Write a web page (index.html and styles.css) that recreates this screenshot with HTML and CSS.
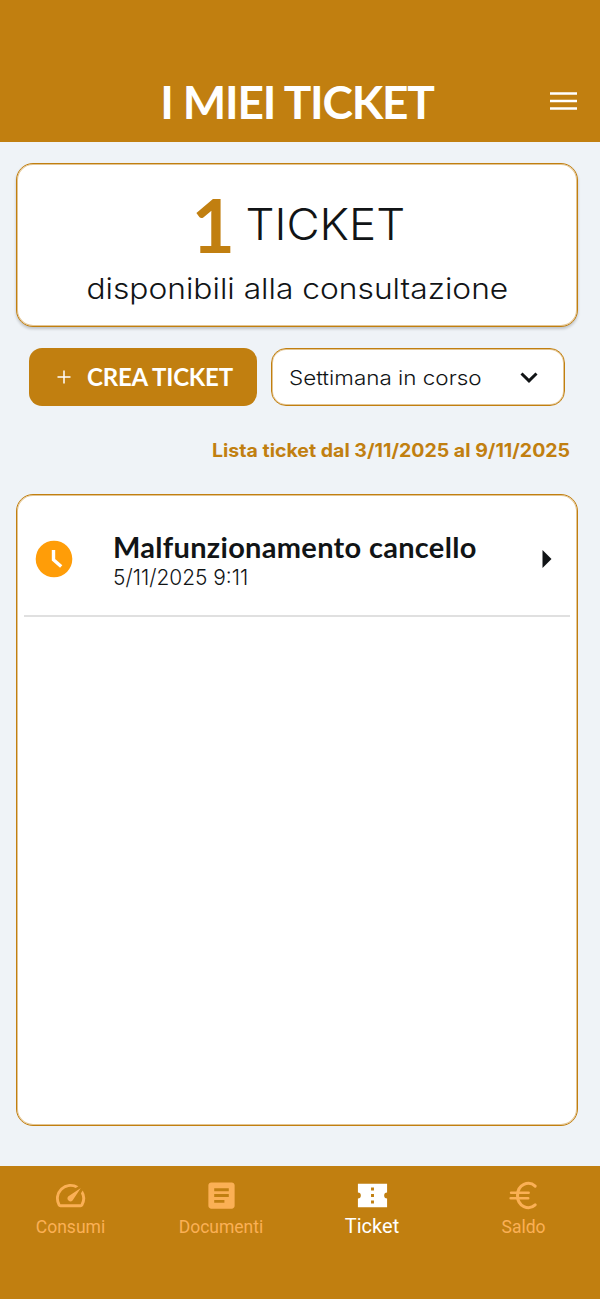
FILE: index.html
```
<!DOCTYPE html>
<html lang="it">
<head>
<meta charset="utf-8">
<title>I miei ticket</title>
<link rel="stylesheet" href="styles.css">
</head>
<body>
<header class="header">
  <h1 class="title">I MIEI TICKET</h1>
  <svg class="menu" viewBox="0 0 27 19"><path d="M0 1.5h27M0 9h27M0 16.5h27" stroke="currentColor" stroke-width="2.7"/></svg>
</header>
<main class="main">
  <section class="card summary">
    <div class="count"><span class="number">1</span><span class="wide count-label">TICKET</span></div>
    <div class="wide available">disponibili alla consultazione</div>
  </section>
  <div class="actions">
    <button class="create"><svg class="plus" viewBox="0 0 14 14"><path d="M7 .5v13M.5 7h13" stroke="currentColor" stroke-width="1.5"/></svg><span>CREA TICKET</span></button>
    <div class="select"><span class="wide period">Settimana in corso</span><svg class="chevron" viewBox="0 0 18 12"><path d="M1.500 2.500 9 9.800 16.500 2.500" fill="none" stroke="currentColor" stroke-width="3"/></svg></div>
  </div>
  <p class="range"><span class="wide range-text">Lista ticket dal 3/11/2025 al 9/11/2025</span></p>
  <section class="card list">
    <article class="ticket">
      <svg class="clock" viewBox="0 0 38 38"><circle cx="19" cy="19" r="18.300" fill="#ff9d08"/><path d="M18.500 10v9.800l7.700 6.700" fill="none" stroke="#fff" stroke-width="3.400"/></svg>
      <div class="ticket-text">
        <h2 class="ticket-title">Malfunzionamento cancello</h2>
        <span class="wide date">5/11/2025 9:11</span>
      </div>
      <svg class="arrow" viewBox="0 0 10 18"><path d="M.5 0 9.500 9 .5 18z" fill="currentColor"/></svg>
    </article>
  </section>
</main>
<nav class="nav">
  <a class="tab"><svg class="icon" viewBox="0 0 24 24"><path fill="currentColor" d="M20.380 8.570l-1.230 1.850a8 8 0 0 1-.22 7.580H5.070A8 8 0 0 1 15.580 6.850l1.850-1.230A10 10 0 0 0 3.350 19a2 2 0 0 0 1.720 1h13.850a2 2 0 0 0 1.740-1 10 10 0 0 0-.27-10.440zM10.590 15.410a2 2 0 0 0 2.830 0l5.660-8.490-8.490 5.660a2 2 0 0 0 0 2.830z"/></svg><span>Consumi</span></a>
  <a class="tab"><svg class="icon" viewBox="0 0 24 24"><path fill="currentColor" d="M19 3H5c-1.100 0-2 .9-2 2v14c0 1.100.9 2 2 2h14c1.100 0 2-.9 2-2V5c0-1.100-.9-2-2-2zm-5 14H7v-2h7v2zm3-4H7v-2h10v2zm0-4H7V7h10v2z"/></svg><span>Documenti</span></a>
  <a class="tab active"><svg class="icon" viewBox="0 0 24 24"><path fill="currentColor" fill-rule="evenodd" d="M2 4h20v6a2 2 0 0 0 0 4v6H2v-6a2 2 0 0 0 0-4zM11 6.500v2h2v-2zM11 11v2h2v-2zM11 15.500v2h2v-2z"/></svg><span>Ticket</span></a>
  <a class="tab"><svg class="icon" viewBox="0 0 24 24"><path fill="none" stroke="currentColor" stroke-width="2.100" stroke-linecap="round" d="M20 5.600C15.500 1.400 7.900 4.500 7.900 12S15.500 22.600 20 18.400"/><path fill="none" stroke="currentColor" stroke-width="1.800" stroke-linecap="round" d="M3.500 10.100h12M3.200 13.900h12"/></svg><span>Saldo</span></a>
</nav>
</body>
</html>
```
FILE: styles.css
```
* { box-sizing: border-box; }
body {
  margin: 0;
  height: 1299px;
  display: flex;
  flex-direction: column;
  background: #eff3f7;
  color: #111416;
  font-family: Lato, sans-serif;
}
svg { display: block; flex: none; }
.header {
  height: 142px;
  padding: 60px 23px 0 0;
  background: #c17f10;
  color: #fff;
  display: grid;
  grid-template-columns: 1fr 27px;
  align-items: center;
}
.title { margin: 0; padding: 2px 0 0 44px; font-size: 46px; line-height: 54px; font-weight: 700; letter-spacing: -1.2px; text-align: center; }
.menu { width: 27px; height: 19px; }
.main { flex: 1; padding: 20.5px 22px 40px 16px; display: flex; flex-direction: column; }
.card { background: #fff; border: 1px solid #c17f10; border-radius: 17px; box-shadow: inset 0 0 0 1px rgba(193, 127, 16, .45); }
.wide { display: inline-block; font-family: Inter, sans-serif; font-weight: 300; white-space: nowrap; }
.summary { height: 164px; padding-top: 20px; display: flex; flex-direction: column; align-items: center; box-shadow: inset 0 0 0 1px rgba(193, 127, 16, .45), 0 2px 3px rgba(0, 0, 0, .2); }
.count { height: 80px; display: flex; align-items: center; gap: 15px; line-height: 80px; padding-right: 2px; }
.number { font-size: 75px; font-weight: 700; color: #c17f10; }
.count-label { font-size: 43px; transform: scaleX(1.06); }
.available { font-size: 28.5px; line-height: 40px; margin-top: 5px; transform: scaleX(1.114); }
.actions { display: flex; gap: 14px; padding: 0 13px; margin-top: 21px; height: 58.5px; }
.create { width: 228px; border: 0; border-radius: 13px; background: #c17f10; color: #fff; font: 700 24px Lato, sans-serif; letter-spacing: -.2px; display: flex; align-items: center; padding: 0 0 0 28px; gap: 16px; white-space: nowrap; }
.plus { width: 14px; height: 14px; }
.select { width: 294px; background: #fff; border: 1px solid #c17f10; box-shadow: inset 0 0 0 1px rgba(193, 127, 16, .45); border-radius: 15px; display: flex; align-items: center; justify-content: space-between; padding: 0 26px 0 17px; }
.period { font-size: 20px; padding-top: 2px; transform: scaleX(1.122); transform-origin: left; }
.chevron { width: 18px; height: 12px; }
.range { margin: 30px 8px 0 0; height: 28px; line-height: 28px; text-align: right; color: #c17f10; }
.range-text { font-size: 18.5px; font-weight: 700; transform: scaleX(1.056); transform-origin: right; }
.list { flex: 1; margin-top: 29.500px; padding: 0 7px; }
.ticket { height: 122px; border-bottom: 2px solid #e0e0e0; padding: 8px 18px 0 11px; display: flex; align-items: center; }
.clock { width: 38px; height: 38px; }
.ticket-text { flex: 1; margin-left: 40px; padding-top: 5px; }
.ticket-title { margin: 0; font-size: 29px; line-height: 32px; font-weight: 700; letter-spacing: .3px; }
.date { display: block; width: max-content; font-size: 22px; line-height: 29px; transform: scaleX(.95); transform-origin: left; }
.arrow { width: 10px; height: 18px; }
.nav { height: 133px; padding: 12px 2px 0 0; background: #c17f10; color: #fbb055; display: grid; grid-template-columns: 141px 160px 142px 161px; font: 400 17.5px/28px Roboto, sans-serif; }
.tab { display: flex; flex-direction: column; align-items: center; }
.icon { width: 35px; height: 35px; }
.active { color: #fff; font-size: 20px; line-height: 26px; }
```
